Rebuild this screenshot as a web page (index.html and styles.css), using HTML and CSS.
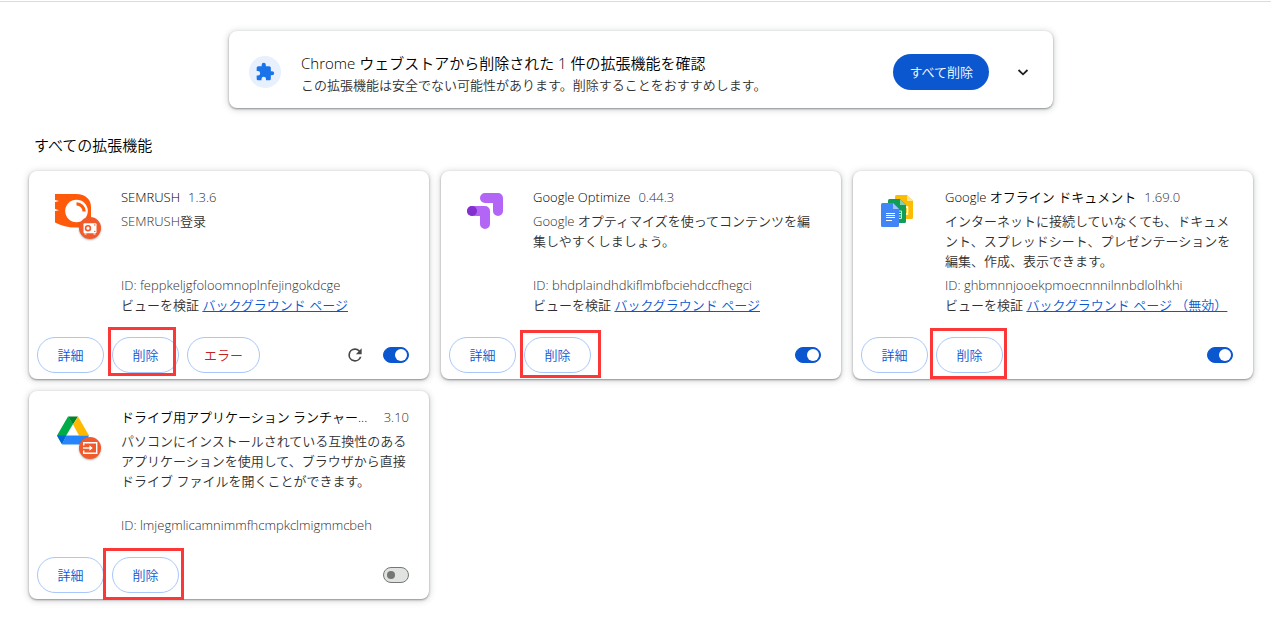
FILE: index.html
```html
<!DOCTYPE html>
<html lang="ja">
<head>
<meta charset="utf-8">
<meta name="viewport" content="width=device-width, initial-scale=1">
<title>拡張機能</title>
<link rel="stylesheet" href="styles.css">
</head>
<body>
<main class="page">
  <section class="banner">
    <span class="banner-icon">
      <svg width="20" height="20" viewBox="0 0 24 24" aria-hidden="true"><path fill="#1a73e8" d="M20.500 11H19V7c0-1.100-.9-2-2-2h-4V3.500a2.500 2.500 0 0 0-5 0V5H4c-1.100 0-1.990.9-1.990 2v3.800H3.500a2.700 2.700 0 0 1 0 5.400H2V20c0 1.100.9 2 2 2h3.800v-1.500a2.700 2.700 0 0 1 5.400 0V22H17c1.100 0 2-.9 2-2v-4h1.500a2.500 2.500 0 0 0 0-5z"/></svg>
    </span>
    <div class="banner-text">
      <h2 class="banner-title">Chrome ウェブストアから削除された 1 件の拡張機能を確認</h2>
      <p class="banner-desc">この拡張機能は安全でない可能性があります。削除することをおすすめします。</p>
    </div>
    <button class="btn btn-primary" type="button">すべて削除</button>
    <button class="icon-btn banner-toggle" type="button" aria-label="展開">
      <svg width="20" height="20" viewBox="0 0 20 20" aria-hidden="true"><path d="M5.500 8l4.500 4.300L14.500 8" fill="none" stroke="#1f1f1f" stroke-width="1.800"/></svg>
    </button>
  </section>

  <h1 class="section-title">すべての拡張機能</h1>

  <div class="grid">
    <article class="card">
      <div class="card-main">
        <div class="logo">
          <svg width="36" height="36" viewBox="0 0 36 36" aria-hidden="true"><path fill="#ff5a0a" d="M0 1h21C31 1 36 7 36 14v20.500H20C13 34.500 7 33 0 29.500V18l4-.8L0 16V9l4-1L0 7z"/><circle cx="21.500" cy="18" r="11.300" fill="#fff"/><path d="M21.500 10.900a7.500 7.500 0 0 1 7.600 7.600" fill="none" stroke="#ff5a0a" stroke-width="3.200"/></svg>
          <span class="badge"><svg width="22" height="22" viewBox="0 0 22 22" aria-hidden="true"><rect x="4.500" y="6.200" width="13" height="10" rx="1" fill="#fff"/><circle cx="9" cy="11.200" r="2.400" fill="#fff" stroke="#f15a2b" stroke-width="1.600"/><circle cx="15.800" cy="8" r=".7" fill="#f15a2b"/><circle cx="15.800" cy="14.400" r=".7" fill="#f15a2b"/><path d="M5.500 17h2M14.500 17h2" stroke="#fff"/></svg></span>
        </div>
        <div class="info">
          <div class="name-row"><h3 class="name">SEMRUSH</h3><span class="version">1.3.6</span></div>
          <p class="desc">SEMRUSH<span lang="zh">登录</span></p>
          <div class="meta">
            <p>ID: feppkeljgfoloomnoplnfejingokdcge</p>
            <p>ビューを検証 <a href="#">バックグラウンド ページ</a></p>
          </div>
        </div>
      </div>
      <div class="actions">
        <button class="btn" type="button">詳細</button>
        <span class="marked"><button class="btn" type="button">削除</button><span class="mark mark-a"></span></span>
        <button class="btn btn-error" type="button">エラー</button>
        <div class="controls">
          <button class="icon-btn" type="button" aria-label="再読み込み"><svg width="20" height="20" viewBox="0 0 24 24" aria-hidden="true"><path fill="#474747" d="M17.650 6.350A7.960 7.960 0 0 0 12 4a8 8 0 1 0 7.730 10h-2.080A6 6 0 1 1 12 6c1.660 0 3.140.69 4.220 1.780L13 11h7V4z"/></svg></button>
          <input class="switch" type="checkbox" checked aria-label="SEMRUSH 有効">
        </div>
      </div>
    </article>

    <article class="card">
      <div class="card-main">
        <div class="logo">
          <svg width="36" height="36" viewBox="0 0 36 36" aria-hidden="true"><g fill="none" stroke="#b366f6" stroke-width="10" stroke-linecap="round" stroke-linejoin="round"><path d="M18 5h13v13M5 18h13v13"/></g><circle cx="5" cy="18" r="5" fill="#8430ce"/></svg>
        </div>
        <div class="info">
          <div class="name-row"><h3 class="name">Google Optimize</h3><span class="version">0.44.3</span></div>
          <p class="desc">Google オプティマイズを使ってコンテンツを編集しやすくしましょう。</p>
          <div class="meta">
            <p>ID: bhdplaindhdkiflmbfbciehdccfhegci</p>
            <p>ビューを検証 <a href="#">バックグラウンド ページ</a></p>
          </div>
        </div>
      </div>
      <div class="actions">
        <button class="btn" type="button">詳細</button>
        <span class="marked"><button class="btn" type="button">削除</button><span class="mark mark-b"></span></span>
        <div class="controls"><input class="switch" type="checkbox" checked aria-label="Google Optimize 有効"></div>
      </div>
    </article>

    <article class="card">
      <div class="card-main">
        <div class="logo">
          <svg width="36" height="36" viewBox="0 0 36 36" aria-hidden="true"><path fill="#fbbc04" d="M17.500 2H28l6 6v16.500a1.500 1.500 0 0 1-1.500 1.500h-15A1.500 1.500 0 0 1 16 24.500v-21A1.500 1.500 0 0 1 17.500 2z"/><path fill="#fde293" d="M28 2l6 6h-6z"/><path d="M23 14h5.500v7H23" fill="none" stroke="#fff" stroke-width="1.500"/><path fill="#0f9d58" d="M10.500 6H21l6 6v16.500a1.500 1.500 0 0 1-1.500 1.500h-15A1.500 1.500 0 0 1 9 28.500v-21A1.500 1.500 0 0 1 10.500 6z"/><path fill="#87ceac" d="M21 6l6 6h-6z"/><path d="M16 18h6.500v7.500H16M16 20.500h6.500M16 23h6.500" fill="none" stroke="#cfe9dc"/><path fill="#4285f4" d="M3.500 10H14l6 6v16.500a1.500 1.500 0 0 1-1.500 1.500h-15A1.500 1.500 0 0 1 2 32.500v-21A1.500 1.500 0 0 1 3.500 10z"/><path fill="#a1c2fa" d="M14 10l6 6h-6z"/><path d="M7 20.500h9M7 22.500h9M7 24.500h9M7 27.500h6" stroke="#fff"/></svg>
        </div>
        <div class="info">
          <div class="name-row"><h3 class="name">Google オフライン ドキュメント</h3><span class="version">1.69.0</span></div>
          <p class="desc">インターネットに接続していなくても、ドキュメント、スプレッドシート、プレゼンテーションを編集、作成、表示できます。</p>
          <div class="meta">
            <p>ID: ghbmnnjooekpmoecnnnilnnbdlolhkhi</p>
            <p>ビューを検証 <a href="#">バックグラウンド ページ （無効）</a></p>
          </div>
        </div>
      </div>
      <div class="actions">
        <button class="btn" type="button">詳細</button>
        <span class="marked"><button class="btn" type="button">削除</button><span class="mark mark-c"></span></span>
        <div class="controls"><input class="switch" type="checkbox" checked aria-label="Google オフライン ドキュメント 有効"></div>
      </div>
    </article>

    <article class="card">
      <div class="card-main">
        <div class="logo">
          <svg width="36" height="36" viewBox="0 0 36 36" aria-hidden="true"><path fill="#00ac47" d="M13 3.500L2 22.500l4.500 8L18 11z"/><path fill="#00832d" d="M13 3.500h10L18 11.500z"/><path fill="#ffba00" d="M23 3.500l11 19H24L18 11.500z"/><path fill="#2684fc" d="M11.500 22.500H34l-4 9H7z"/><path fill="#0066da" d="M2 22.500h9.500L7 31.500z"/></svg>
          <span class="badge"><svg width="22" height="22" viewBox="0 0 22 22" aria-hidden="true"><path d="M4.700 8.500V5.700h13v10.600h-13v-2.800" fill="none" stroke="#fff" stroke-width="1.400"/><path d="M4 11h7" stroke="#fff" stroke-width="1.400"/><path d="M10.500 8.200l3.200 2.800-3.200 2.800z" fill="#fff"/></svg></span>
        </div>
        <div class="info">
          <div class="name-row name-row-spread"><h3 class="name">ドライブ用アプリケーション ランチャー...</h3><span class="version">3.10</span></div>
          <p class="desc">パソコンにインストールされている互換性のあるアプリケーションを使用して、ブラウザから直接ドライブ ファイルを開くことができます。</p>
          <div class="meta">
            <p>ID: lmjegmlicamnimmfhcmpkclmigmmcbeh</p>
          </div>
        </div>
      </div>
      <div class="actions">
        <button class="btn" type="button">詳細</button>
        <span class="marked"><button class="btn" type="button">削除</button><span class="mark mark-d"></span></span>
        <div class="controls"><input class="switch" type="checkbox" aria-label="ドライブ用アプリケーション ランチャー 有効"></div>
      </div>
    </article>
  </div>
</main>
</body>
</html>
```

FILE: styles.css
```css
* {
  box-sizing: border-box;
}

body {
  margin: 0;
  background: #fff;
  color: #303030;
  font: 350 13px/20px "Open Sans", "Noto Sans CJK JP", sans-serif;
}

h1,
h2,
h3,
p {
  margin: 0;
  font-weight: inherit;
}

button {
  font: inherit;
  cursor: pointer;
}

.page {
  margin-top: 1px;
  padding: 29px 18px 16px 29px;
  border-top: 1px solid #dcdcdc;
}

.banner,
.card {
  background: #fff;
  border-radius: 8px;
  box-shadow: 0 1px 2px rgba(60, 64, 67, 0.5), 0 1px 6px 1px rgba(60, 64, 67, 0.22);
}

.banner {
  display: flex;
  align-items: center;
  max-width: 824px;
  min-height: 77px;
  margin: 0 auto;
  padding: 5px 10px 0 20px;
}

.banner-icon {
  display: flex;
  align-items: center;
  justify-content: center;
  width: 32px;
  height: 32px;
  border-radius: 50%;
  background: #e8f0fe;
}

.banner-text {
  flex: 1;
  margin-left: 20px;
}

.banner-title {
  padding-top: 2px;
  color: #000;
  font-size: 15px;
  line-height: 24px;
}

.btn {
  min-width: 67px;
  height: 36px;
  padding: 0 16px;
  border: 1px solid #a8c7fa;
  border-radius: 18px;
  background: #fff;
  color: #0b57d0;
}

.btn-primary {
  border: 0;
  background: #0b57d0;
  color: #fff;
}

.btn-error {
  color: #c5221f;
}

.icon-btn {
  display: flex;
  padding: 0;
  border: 0;
  background: none;
}

.banner-toggle {
  padding: 10px;
  margin-left: 14px;
}

.section-title {
  margin: 25px 0 14px 5px;
  color: #000;
  font-size: 15px;
  line-height: 24px;
}

.grid {
  display: grid;
  grid-template-columns: repeat(auto-fill, minmax(360px, 1fr));
  gap: 12px;
}

.card {
  display: flex;
  flex-direction: column;
  min-height: 208px;
}

.card-main {
  display: flex;
  flex: 1;
  gap: 30px;
  padding: 16px 20px 16px 26px;
}

.logo {
  position: relative;
  flex: none;
  width: 36px;
  height: 36px;
  margin-top: 6px;
}

.logo svg {
  display: block;
}

.badge {
  position: absolute;
  top: 24px;
  left: 24px;
  border-radius: 50%;
  background: #f15a2b;
  box-shadow: 0 1px 2px rgba(60, 64, 67, 0.4);
}

.info {
  display: flex;
  flex: 1;
  flex-direction: column;
  min-width: 0;
}

.name-row {
  display: flex;
  gap: 8px;
  margin-bottom: 4px;
}

.name-row-spread {
  justify-content: space-between;
}

.name {
  color: #000;
  font-size: 13px;
  white-space: nowrap;
}

.desc {
  line-break: anywhere;
}

.meta {
  margin-top: auto;
  padding-top: 4px;
  white-space: nowrap;
}

.meta a {
  color: #0b57d0;
}

[lang="zh"] {
  font-family: "Open Sans", "Noto Sans CJK SC", sans-serif;
}

.actions {
  display: flex;
  align-items: center;
  gap: 8px;
  padding: 6px 20px 6px 8px;
}

.marked {
  position: relative;
  display: flex;
}

.mark {
  position: absolute;
  border: 3px solid #fb3737;
  pointer-events: none;
}

.mark-a {
  inset: -10px 3px -3px -4px;
}

.mark-b {
  inset: -7px -10px -5px -4px;
}

.mark-c {
  inset: -9px -4px -6px -6px;
}

.mark-d {
  inset: -9px -5px -7px -9px;
}

.controls {
  display: flex;
  align-items: center;
  gap: 18px;
  margin-left: auto;
}

.switch {
  display: flex;
  align-items: center;
  width: 26px;
  height: 16px;
  margin: 0;
  padding: 0 3px;
  border: 1px solid #747775;
  border-radius: 8px;
  background: #e1e3e1;
  appearance: none;
}

.switch::before {
  content: "";
  width: 8px;
  height: 8px;
  border-radius: 50%;
  background: #747775;
}

.switch:checked {
  justify-content: flex-end;
  padding: 0 1px;
  border-color: #0b57d0;
  background: #0b57d0;
}

.switch:checked::before {
  width: 12px;
  height: 12px;
  background: #fff;
}
```
